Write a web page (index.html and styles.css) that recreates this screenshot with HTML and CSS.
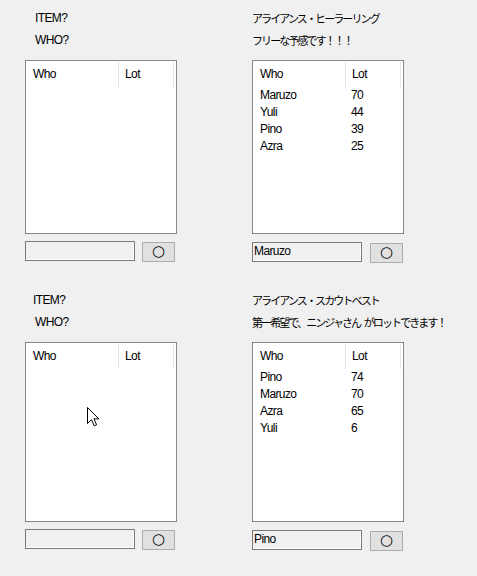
FILE: index.html
```html
<!DOCTYPE html>
<html lang="ja">
<head>
<meta charset="utf-8">
<title>Lot</title>
<link rel="stylesheet" href="styles.css">
</head>
<body>
<div class="board">
  <section class="panel">
    <div class="label first indent">ITEM?</div>
    <div class="label indent">WHO?</div>
    <div class="list">
      <div class="row head"><span class="c1">Who</span><span class="c2">Lot</span></div>
    </div>
    <div class="controls">
      <div class="field"></div>
      <button class="btn">○</button>
    </div>
  </section>

  <section class="panel">
    <div class="label first jp">アライアンス・ヒーラーリング</div>
    <div class="label jp">フリーな予感です！！！</div>
    <div class="list">
      <div class="row head"><span class="c1">Who</span><span class="c2">Lot</span></div>
      <div class="row"><span class="c1">Maruzo</span><span class="c2">70</span></div>
      <div class="row"><span class="c1">Yuli</span><span class="c2">44</span></div>
      <div class="row"><span class="c1">Pino</span><span class="c2">39</span></div>
      <div class="row"><span class="c1">Azra</span><span class="c2">25</span></div>
    </div>
    <div class="controls low">
      <div class="field">Maruzo</div>
      <button class="btn">○</button>
    </div>
  </section>

  <section class="panel">
    <div class="label first indent-s">ITEM?</div>
    <div class="label indent">WHO?</div>
    <div class="list tall">
      <div class="row head"><span class="c1">Who</span><span class="c2">Lot</span></div>
      <svg class="cursor" width="13" height="20" viewBox="0 0 13 20">
        <path d="M0.5 0.5 L0.5 16.5 L4.5 12.7 L7.2 18.8 L9.6 17.8 L7 11.8 L11.8 11.8 Z" fill="#fff" stroke="#000" stroke-width="1" stroke-linejoin="miter"/>
      </svg>
    </div>
    <div class="controls">
      <div class="field"></div>
      <button class="btn">○</button>
    </div>
  </section>

  <section class="panel">
    <div class="label first jp">アライアンス・スカウトベスト</div>
    <div class="label jp">第一希望で、ニンジャさん がロットできます！</div>
    <div class="list tall">
      <div class="row head"><span class="c1">Who</span><span class="c2">Lot</span></div>
      <div class="row"><span class="c1">Pino</span><span class="c2">74</span></div>
      <div class="row"><span class="c1">Maruzo</span><span class="c2">70</span></div>
      <div class="row"><span class="c1">Azra</span><span class="c2">65</span></div>
      <div class="row"><span class="c1">Yuli</span><span class="c2">6</span></div>
    </div>
    <div class="controls low">
      <div class="field">Pino</div>
      <button class="btn">○</button>
    </div>
  </section>
</div>
</body>
</html>
```

FILE: styles.css
```css
html, body {
  margin: 0;
  padding: 0;
  background: #f0f0f0;
}

body {
  width: 477px;
  height: 576px;
  overflow: hidden;
  font-family: "Liberation Sans", Arial, sans-serif;
  font-size: 12px;
  color: #000;
  letter-spacing: -0.6px;
}

.board {
  display: grid;
  grid-template-columns: 152px 152px;
  grid-auto-rows: 282px;
  column-gap: 75px;
  padding: 11px 0 0 25px;
}

.panel {
  display: flex;
  flex-direction: column;
  align-items: flex-start;
}

.label {
  height: 14px;
  line-height: 14px;
  white-space: nowrap;
}

.label.first {
  margin-bottom: 8px;
}

.label.indent {
  padding-left: 10px;
}

.label.indent-s {
  padding-left: 8px;
}

.label.jp {
  font-family: "Noto Sans CJK JP", "Noto Sans", sans-serif;
  font-size: 11px;
  letter-spacing: -1.9px;
  word-spacing: 3px;
}

.list {
  position: relative;
  margin-top: 13px;
  width: 152px;
  height: 174px;
  box-sizing: border-box;
  border: 1px solid #828790;
  background: #fff;
}

.list.tall {
  height: 180px;
}

.row {
  display: flex;
  height: 17px;
  line-height: 17px;
}

.row .c1 {
  width: 92px;
  padding-left: 7px;
  box-sizing: border-box;
}

.row .c2 {
  width: 55px;
  padding-left: 6px;
  box-sizing: border-box;
}

.row.head {
  height: 26px;
}

.row.head .c1,
.row.head .c2 {
  margin-top: 1px;
  height: 25px;
  padding-top: 4px;
  box-sizing: border-box;
  border-right: 1px solid #e5e5e5;
}

.row.head .c1 {
  width: 93px;
}

.cursor {
  position: absolute;
  left: 61px;
  top: 64px;
}

.controls {
  display: flex;
  align-items: flex-start;
  margin-top: 7px;
}

.controls.low {
  margin-top: 8px;
}

.field {
  width: 110px;
  height: 20px;
  box-sizing: border-box;
  border: 1px solid #7a7a7a;
  box-shadow: inset -1px -1px 0 #fff;
  background: #f0f0f0;
  line-height: 17px;
  padding-left: 1px;
  font-size: 12px;
}

.btn {
  margin: 1px 0 0 7px;
  width: 33px;
  height: 20px;
  padding: 0 0 2px;
  box-sizing: border-box;
  border: 1px solid #adadad;
  background: #e1e1e1;
  font-family: "DejaVu Sans", sans-serif;
  font-size: 15px;
  line-height: 16px;
  color: #000;
  letter-spacing: 0;
}

.controls.low .btn {
  margin-left: 8px;
}
```
